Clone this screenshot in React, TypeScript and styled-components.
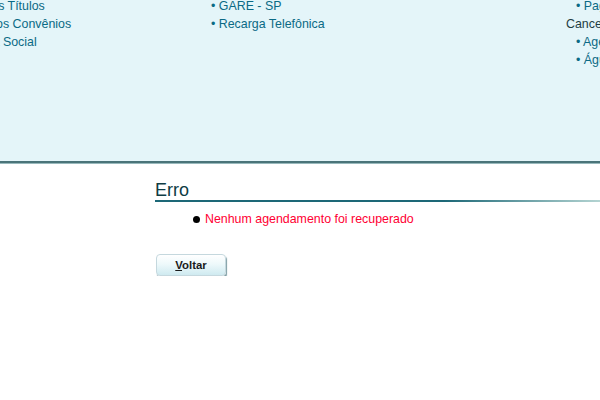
import React from 'react';
import styled, { createGlobalStyle } from 'styled-components';

const GlobalStyle = createGlobalStyle`
  html, body {
    margin: 0;
    padding: 0;
    background: #ffffff;
    overflow: hidden;
  }
  body {
    font-family: "Liberation Sans", Arial, sans-serif;
    font-size: 12.4px;
  }
`;

const menu = [
  {
    items: ['Pagamentos Títulos', 'Lançamentos Convênios', 'Previdência Social'],
  },
  {
    items: ['GARE - SP', 'Recarga Telefônica'],
  },
  {
    items: ['Pagamentos'],
    title: 'Cancelamento',
    sub: ['Agendamentos', 'Água e Esgoto'],
  },
];

export default function App() {
  return (
    <>
      <GlobalStyle />
      <Header>
        <Columns>
          {menu.map((col, i) => (
            <Column key={i}>
              {col.items.map((item) => (
                <MenuItem key={item}>{item}</MenuItem>
              ))}
              {col.title && <MenuTitle>{col.title}</MenuTitle>}
              {col.sub &&
                col.sub.map((item) => <MenuItem key={item}>{item}</MenuItem>)}
            </Column>
          ))}
        </Columns>
      </Header>
      <Content>
        <Title>Erro</Title>
        <Messages>
          <Message>Nenhum agendamento foi recuperado</Message>
        </Messages>
        <Button type="button">
          <u>V</u>oltar
        </Button>
      </Content>
    </>
  );
}

const Header = styled.div`
  height: 161px;
  background: #e4f5f9;
  border-bottom: 2px solid #4a7479;
  box-shadow: 0 1px 0 #98b9bc;
  overflow: hidden;
`;

const Columns = styled.div`
  display: grid;
  grid-template-columns: 284px 365px auto;
  margin-left: -83px;
  margin-top: -3px;
`;

const Column = styled.div`
  display: flex;
  flex-direction: column;
  white-space: nowrap;
`;

const MenuItem = styled.div`
  line-height: 18px;
  padding-left: 10px;
  color: #0b6a85;
  &::before {
    content: '• ';
  }
`;

const MenuTitle = styled.div`
  line-height: 18px;
  color: #1f3d44;
`;

const Content = styled.div`
  margin: 15px 0 0 155px;
`;

const Title = styled.h2`
  margin: 0;
  padding-top: 3px;
  font-size: 18px;
  font-weight: normal;
  line-height: 19px;
  color: #0f3c44;
  &::after {
    content: '';
    display: block;
    height: 2px;
    background: linear-gradient(to right, #1d6877 0%, #1d6877 65%, #b4d4d2 100%);
  }
`;

const Messages = styled.ul`
  list-style: none;
  margin: 9px 0 0 0;
  padding: 0 0 0 38px;
`;

const Message = styled.li`
  display: flex;
  align-items: center;
  gap: 5px;
  line-height: 16px;
  color: #ff0033;
  &::before {
    content: '';
    width: 7px;
    height: 7px;
    border-radius: 50%;
    background: #000000;
  }
`;

const Button = styled.button`
  margin: 27px 0 0 1px;
  width: 70px;
  height: 22px;
  padding: 0;
  border: 1px solid #c5d8de;
  border-radius: 4px;
  background: linear-gradient(to bottom, #ffffff 0%, #eef9fb 45%, #cfeaf0 100%);
  box-shadow: 1px 2px 1px #7f9ea5;
  font-family: "Liberation Sans", Arial, sans-serif;
  font-size: 11.4px;
  font-weight: bold;
  color: #1a1a1a;
  cursor: pointer;
`;
